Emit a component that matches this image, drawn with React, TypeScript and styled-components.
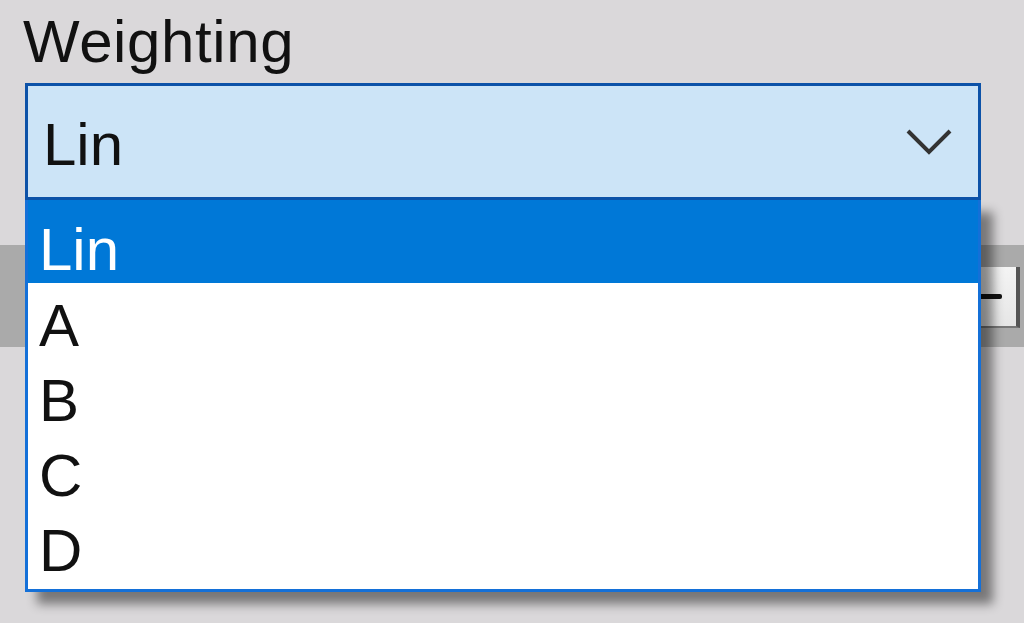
import React from "react";
import styled, { createGlobalStyle } from "styled-components";

const Global = createGlobalStyle`
  html, body { margin: 0; padding: 0; background: #dad8da; }
  body { font-family: "Liberation Sans", Arial, sans-serif; overflow: hidden; }
`;

const Page = styled.div`
  width: 1024px;
  height: 623px;
  background: #dad8da;
  overflow: hidden;
  filter: blur(0.6px);
`;

const Field = styled.div`
  padding: 8px 0 0 23px;
  display: flex;
  flex-direction: column;
`;

const Label = styled.div`
  font-size: 60px;
  line-height: 67px;
  height: 67px;
  color: #111;
  letter-spacing: 0.6px;
`;

const ComboWrap = styled.div`
  position: relative;
  margin: 8px 0 0 2px;
  width: 956px;
  z-index: 2;
`;

const Combo = styled.div`
  box-sizing: border-box;
  height: 117px;
  border: 3px solid #0c52a8;
  background: #cce4f7;
  display: flex;
  align-items: center;
  justify-content: space-between;
  padding: 5px 25px 0 15px;
  font-size: 60px;
  line-height: 67px;
  color: #111;
`;

const Chevron = styled.svg`
  width: 48px;
  height: 28px;
  margin-top: -5px;
`;

const Dropdown = styled.ul`
  position: absolute;
  left: 0;
  top: 117px;
  width: 956px;
  box-sizing: border-box;
  margin: 0;
  padding: 0 0 6px 0;
  list-style: none;
  background: #ffffff;
  border: 3px solid #1470d8;
  border-top: 0;
  box-shadow: 12px 12px 10px rgba(0, 0, 0, 0.45);
`;

const Item = styled.li<{ $selected?: boolean }>`
  box-sizing: border-box;
  height: ${(p) => (p.$selected ? 83 : 75)}px;
  padding: ${(p) => (p.$selected ? 19 : 12)}px 0 0 11px;
  font-size: 60px;
  line-height: 62px;
  color: ${(p) => (p.$selected ? "#ffffff" : "#111")};
  background: ${(p) => (p.$selected ? "#0078d7" : "transparent")};
`;

const Band = styled.div`
  margin-top: 45px;
  height: 102px;
  background: #aaaaaa;
  display: flex;
  justify-content: flex-end;
  align-items: flex-start;
  position: relative;
  z-index: 1;
`;

const SpinButton = styled.div`
  box-sizing: border-box;
  margin: 22px 4px 0 0;
  width: 62px;
  height: 61px;
  background: linear-gradient(#f4f4f4, #e6e6e6);
  border-right: 4px solid #555;
  border-bottom: 2px solid #777;
  display: flex;
  align-items: center;
  justify-content: flex-end;
  padding-right: 14px;
`;

const Dash = styled.div`
  width: 28px;
  height: 5px;
  background: #111;
  border-radius: 2px;
`;

const items = ["A", "B", "C", "D"];

export default function App() {
  return (
    <Page>
      <Global />
      <Field>
        <Label>Weighting</Label>
        <ComboWrap>
          <Combo>
            <span>Lin</span>
            <Chevron viewBox="0 0 48 28">
              <polyline
                points="3,3 24,24 45,3"
                fill="none"
                stroke="#333"
                strokeWidth="4"
              />
            </Chevron>
          </Combo>
          <Dropdown>
            <Item $selected>Lin</Item>
            {items.map((it) => (
              <Item key={it}>{it}</Item>
            ))}
          </Dropdown>
        </ComboWrap>
      </Field>
      <Band>
        <SpinButton>
          <Dash />
        </SpinButton>
      </Band>
    </Page>
  );
}
